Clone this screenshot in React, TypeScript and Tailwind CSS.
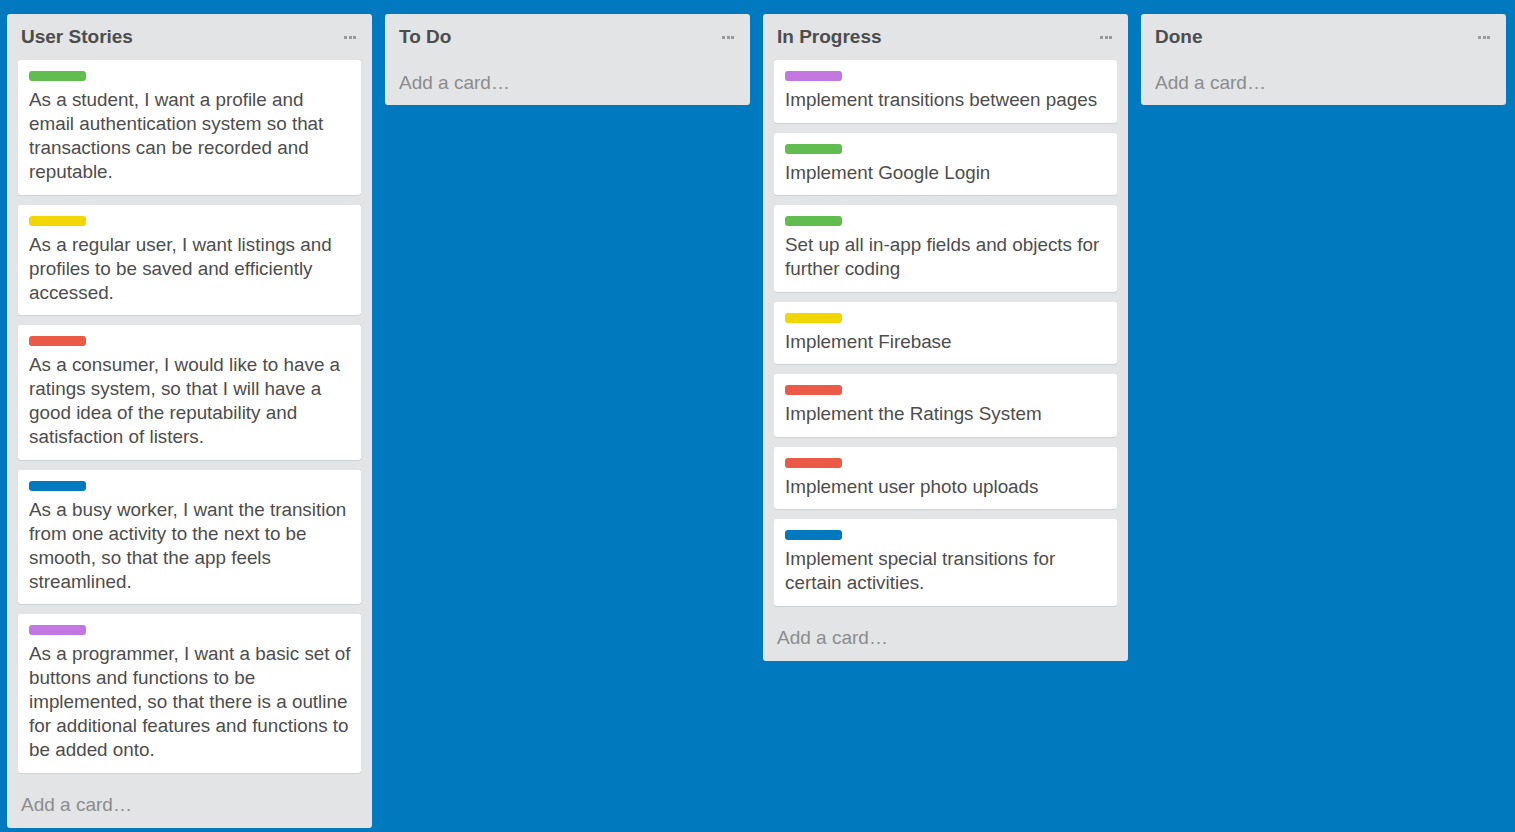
import React from "react";

type Card = { color: string; text: string };
type List = { title: string; cards: Card[] };

const G = "bg-[#61bd4f]";
const Y = "bg-[#f2d600]";
const R = "bg-[#eb5a46]";
const B = "bg-[#0079bf]";
const P = "bg-[#c377e0]";

const lists: List[] = [
  {
    title: "User Stories",
    cards: [
      { color: G, text: "As a student, I want a profile and email authentication system so that transactions can be recorded and reputable." },
      { color: Y, text: "As a regular user, I want listings and profiles to be saved and efficiently accessed." },
      { color: R, text: "As a consumer, I would like to have a ratings system, so that I will have a good idea of the reputability and satisfaction of listers." },
      { color: B, text: "As a busy worker, I want the transition from one activity to the next to be smooth, so that the app feels streamlined." },
      { color: P, text: "As a programmer, I want a basic set of buttons and functions to be implemented, so that there is a outline for additional features and functions to be added onto." },
    ],
  },
  { title: "To Do", cards: [] },
  {
    title: "In Progress",
    cards: [
      { color: P, text: "Implement transitions between pages" },
      { color: G, text: "Implement Google Login" },
      { color: G, text: "Set up all in-app fields and objects for further coding" },
      { color: Y, text: "Implement Firebase" },
      { color: R, text: "Implement the Ratings System" },
      { color: R, text: "Implement user photo uploads" },
      { color: B, text: "Implement special transitions for certain activities." },
    ],
  },
  { title: "Done", cards: [] },
];

function Dots() {
  return (
    <div className="flex items-center gap-[1.5px]">
      <span className="block w-[3px] h-[3px] bg-[#999]" />
      <span className="block w-[3px] h-[3px] bg-[#999]" />
      <span className="block w-[3px] h-[3px] bg-[#999]" />
    </div>
  );
}

export default function App() {
  return (
    <div
      className="w-[1515px] h-[832px] bg-[#0079bf] overflow-hidden flex items-start gap-[13px] pl-[7px] pt-[14px]"
      style={{ fontFamily: '"Liberation Sans", Arial, sans-serif' }}
    >
      {lists.map((l) => (
        <div key={l.title} className="w-[365px] shrink-0 bg-[#e2e4e6] rounded-[3px] flex flex-col">
          <div className="h-[46px] flex items-center justify-between pl-[14px] pr-[16px]">
            <span className="text-[19px] font-bold text-[#4d4d4d] leading-[24px]">{l.title}</span>
            <Dots />
          </div>
          <div className="flex flex-col px-[11px]">
            {l.cards.map((c, i) => (
              <div
                key={i}
                className="bg-white rounded-[3px] shadow-[0_1px_0_#cdd2d4] mb-[10px] pt-[11px] pb-[10.5px] pl-[11px] pr-[9px]"
              >
                <div className={`w-[57px] h-[10px] rounded-[3px] mb-[7px] ${c.color}`} />
                <div className="text-[18.85px] leading-[24px] text-[#4d4d4d]">{c.text}</div>
              </div>
            ))}
          </div>
          <div className="h-[45px] flex items-center pl-[14px] pt-[1px] text-[19px] text-[#8c8c8c]">Add a card…</div>
        </div>
      ))}
    </div>
  );
}
